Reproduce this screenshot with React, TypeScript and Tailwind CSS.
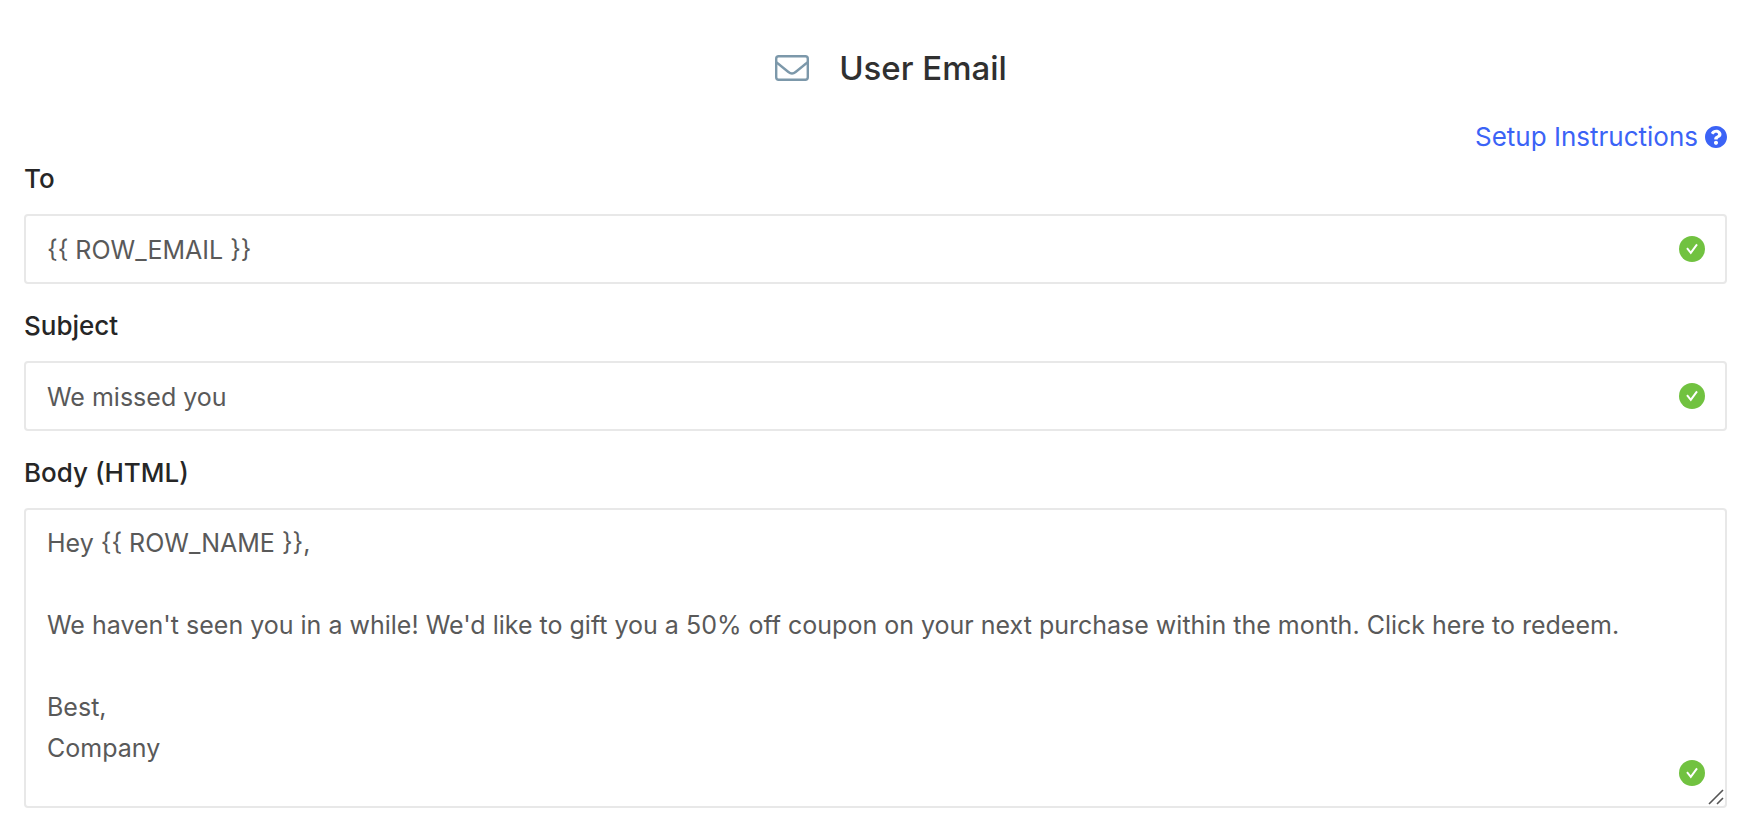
import React from "react";

const bodyText = `Hey {{ ROW_NAME }},

We haven't seen you in a while! We'd like to gift you a 50% off coupon on your next purchase within the month. Click here to redeem.

Best,
Company`;

function EnvelopeIcon() {
  return (
    <svg className="h-[26px] w-[34px]" viewBox="0 0 34 26" fill="none" stroke="#7c98aa" strokeWidth="2.4" aria-hidden="true">
      <rect x="1.2" y="1.2" width="31.6" height="23.6" rx="2.5" />
      <path d="M1.2 7.2C5 10.1 9.4 13.7 13.4 17C15.8 19 18.2 19 20.6 17C24.6 13.7 29 10.1 32.8 7.2" />
    </svg>
  );
}

function HelpIcon() {
  return (
    <svg className="size-[22px]" viewBox="8 8 496 496" fill="currentColor" aria-hidden="true">
      <path d="M504 256c0 136.997-111.043 248-248 248S8 392.997 8 256C8 119.083 119.043 8 256 8s248 111.083 248 248zM262.655 90c-54.497 0-89.255 22.957-116.549 63.758-3.536 5.286-2.353 12.415 2.715 16.258l34.699 26.31c5.205 3.947 12.621 3.008 16.665-2.122 17.864-22.658 30.113-35.797 57.303-35.797 20.429 0 45.698 13.148 45.698 32.958 0 14.976-12.363 22.667-32.534 33.976C247.128 238.528 216 254.941 216 296v4c0 6.627 5.373 12 12 12h56c6.627 0 12-5.373 12-12v-1.333c0-28.462 83.186-29.647 83.186-106.667 0-58.002-60.165-102-116.531-102zM256 338c-25.365 0-46 20.635-46 46 0 25.364 20.635 46 46 46s46-20.636 46-46c0-25.364-20.635-46-46-46z" />
    </svg>
  );
}

function ValidIcon() {
  return (
    <svg className="size-[26px]" viewBox="0 0 26 26" fill="none" aria-hidden="true">
      <circle cx="13" cy="13" r="13" fill="#71c240" />
      <path d="M8 12.2L11.8 16.8L18 8.4" stroke="#fff" strokeWidth="2" />
    </svg>
  );
}

function ResizeHandle() {
  return (
    <svg className="size-4" viewBox="0 0 16 16" stroke="#555" strokeWidth="1.6" aria-hidden="true">
      <path d="M1 15L15 1M9 15L15 9" />
    </svg>
  );
}

const labelClass = "text-[26px] leading-[42px] font-medium text-[#262626]";

const boxClass =
  "block w-full rounded-[4px] border-2 border-[#e8e8e8] bg-white pl-[21px] text-[25px] text-[#595959] outline-none focus:border-[#3b63f6]";

function Field({ id, label, value }: { id: string; label: string; value: string }) {
  return (
    <div className="flex flex-col gap-[14px]">
      <label htmlFor={id} className={labelClass}>
        {label}
      </label>
      <div className="relative">
        <input id={id} type="text" defaultValue={value} className={`${boxClass} h-[70px] pt-0.5 pr-16`} />
        <span className="pointer-events-none absolute top-[22px] right-[22px]">
          <ValidIcon />
        </span>
      </div>
    </div>
  );
}

export default function App() {
  return (
    <main className="min-h-screen bg-white pt-11 pr-[29px] pb-8 pl-6 font-['Inter',sans-serif]">
      <header className="flex items-center justify-center gap-[30px] pl-[31px]">
        <EnvelopeIcon />
        <h1 className="text-[33px] leading-[48px] font-medium text-[#303030]">User Email</h1>
      </header>
      <div className="mt-6 flex justify-end">
        <a href="#setup" className="flex items-center gap-[7px] text-[26px] leading-[42px] text-[#3b63f6]">
          Setup Instructions
          <HelpIcon />
        </a>
      </div>
      <form className="flex flex-col gap-[21px]">
        <Field id="to" label="To" value="{{ ROW_EMAIL }}" />
        <Field id="subject" label="Subject" value="We missed you" />
        <div className="flex flex-col gap-[14px]">
          <label htmlFor="body" className={labelClass}>
            Body (HTML)
          </label>
          <div className="relative">
            <textarea
              id="body"
              defaultValue={bodyText}
              className={`${boxClass} h-[300px] resize-none pt-[13px] pr-12 pb-3 leading-[41px]`}
            />
            <span className="pointer-events-none absolute right-[22px] bottom-[22px]">
              <ValidIcon />
            </span>
            <span className="pointer-events-none absolute right-[3px] bottom-[3px]">
              <ResizeHandle />
            </span>
          </div>
        </div>
      </form>
    </main>
  );
}
